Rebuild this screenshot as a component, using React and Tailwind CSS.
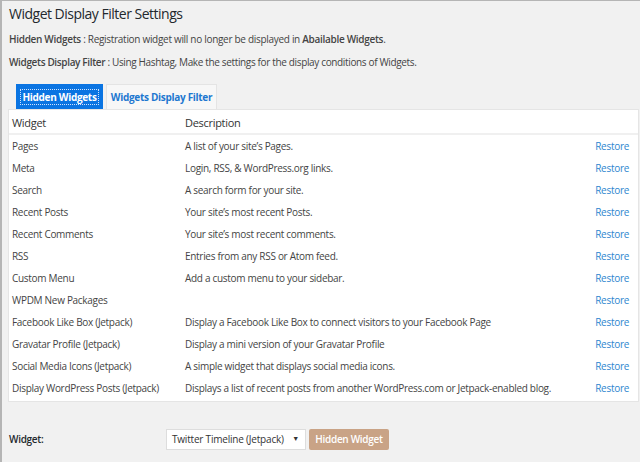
const rows = [
  ["Pages", "A list of your site\u2019s Pages."],
  ["Meta", "Login, RSS, & WordPress.org links."],
  ["Search", "A search form for your site."],
  ["Recent Posts", "Your site\u2019s most recent Posts."],
  ["Recent Comments", "Your site\u2019s most recent comments."],
  ["RSS", "Entries from any RSS or Atom feed."],
  ["Custom Menu", "Add a custom menu to your sidebar."],
  ["WPDM New Packages", ""],
  ["Facebook Like Box (Jetpack)", "Display a Facebook Like Box to connect visitors to your Facebook Page"],
  ["Gravatar Profile (Jetpack)", "Display a mini version of your Gravatar Profile"],
  ["Social Media Icons (Jetpack)", "A simple widget that displays social media icons."],
  ["Display WordPress Posts (Jetpack)", "Displays a list of recent posts from another WordPress.com or Jetpack-enabled blog."],
];

export default function App() {
  return (
    <div
      className="w-[640px] h-[462px] overflow-hidden bg-[#f1f1f1] border-l-2 border-t border-[#b5b5b5] text-[#444] text-[10px] tracking-[-0.3px]"
      style={{ fontFamily: '"Open Sans", sans-serif' }}
    >
      <div className="pl-[6px] pr-[1px]">
        <h1 className="text-[14px] tracking-[-0.5px] leading-[22px] pt-[2px] pl-[1px] text-[#23282d]">Widget Display Filter Settings</h1>
        <p className="mt-[6px] leading-[16px] pl-[1px]">
          <b className="font-semibold">Hidden Widgets</b> : Registration widget will no longer be displayed in{" "}
          <b className="font-semibold">Abailable Widgets</b>.
        </p>
        <p className="mt-[7px] leading-[16px] pl-[1px] tracking-[-0.35px]">
          <b className="font-semibold">Widgets Display Filter</b> : Using Hashtag, Make the settings for the display conditions of Widgets.
        </p>

        <div className="flex gap-[3px] pl-[8px] mt-[14px]">
          <div className="h-[25px] w-[87px] bg-[#0a74e2] flex items-center justify-center whitespace-nowrap">
            <span className="text-white font-bold outline-1 outline-dotted outline-[#cfe3ff] px-[1px] leading-[14px]">Hidden Widgets</span>
          </div>
          <div className="h-[25px] w-[111px] bg-[#f7f7f7] border border-b-0 border-[#e4e4e4] flex items-center justify-center text-[#1e78d0] font-bold whitespace-nowrap">
            Widgets Display Filter
          </div>
        </div>

        <div className="bg-white border border-[#e5e5e5] w-[631px] pb-[2px]">
          <div className="flex items-center h-[25px] pt-[3px] border-b-2 border-[#f0f0f0] text-[11px] text-[#333]">
            <div className="w-[176px] pl-[3px]">Widget</div>
            <div className="flex-1">Description</div>
          </div>
          {rows.map(([name, desc]) => (
            <div key={name} className="flex items-center h-[22px]">
              <div className="w-[176px] pl-[3px] whitespace-nowrap">{name}</div>
              <div className="flex-1 whitespace-nowrap">{desc}</div>
              <div className="pr-[9px] text-[#2e86cf]">Restore</div>
            </div>
          ))}
        </div>

        <div className="flex items-center mt-[27px]">
          <div className="w-[158px] font-semibold text-[#23282d] pl-[1px]">Widget:</div>
          <div className="w-[140px] h-[21px] bg-white border border-[#ddd] flex items-center justify-between pl-[5px] pr-[6px] text-[#333] whitespace-nowrap tracking-[-0.2px]">
            <span>Twitter Timeline (Jetpack)</span>
            <span className="text-[7px]">&#9660;</span>
          </div>
          <div className="ml-[3px] w-[80px] h-[21px] rounded-[2px] bg-[#c9a386] text-white font-semibold flex items-center justify-center whitespace-nowrap">
            Hidden Widget
          </div>
        </div>
      </div>
    </div>
  );
}
